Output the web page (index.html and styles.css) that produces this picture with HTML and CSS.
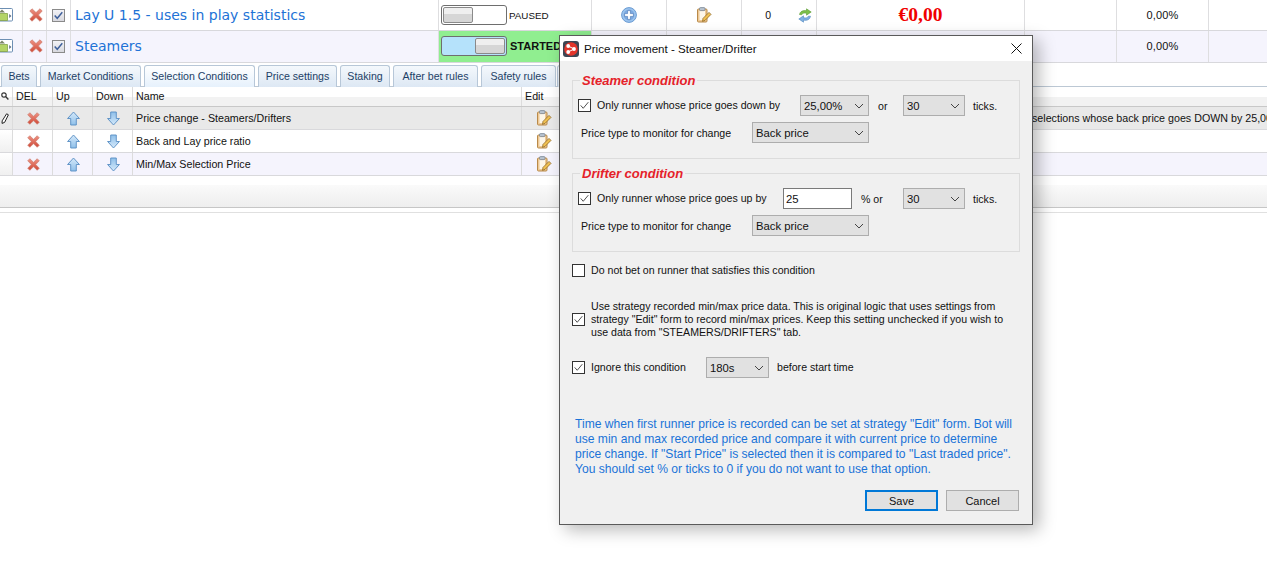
FILE: index.html
```html
<!DOCTYPE html>
<html lang="en">
<head>
<meta charset="utf-8">
<title>Price movement - Steamer/Drifter</title>
<link rel="stylesheet" href="styles.css">
</head>
<body>
<svg class="defs" width="0" height="0" aria-hidden="true">
  <defs>
    <linearGradient id="gx" x1="0" y1="0" x2="0" y2="1"><stop offset="0" stop-color="#ee9384"/><stop offset="1" stop-color="#cf4a38"/></linearGradient>
    <linearGradient id="ga" x1="0" y1="0" x2="0" y2="1"><stop offset="0" stop-color="#d5e9fa"/><stop offset="1" stop-color="#8fc0ea"/></linearGradient>
    <linearGradient id="gd" x1="0" y1="0" x2="0" y2="1"><stop offset="0" stop-color="#8fc0ea"/><stop offset="1" stop-color="#d5e9fa"/></linearGradient>
    <symbol id="i-x" viewBox="0 0 14 14"><path d="M3 .8 7 4.6 11 .8 13.2 3 9.4 7 13.2 11 11 13.2 7 9.4 3 13.2.8 11 4.6 7 .8 3Z" fill="url(#gx)" stroke="#cf8274" stroke-width=".8"/></symbol>
    <symbol id="i-up" viewBox="0 0 14 16"><path d="M7 1 13.4 8H10V15H4V8H.6Z" fill="url(#ga)" stroke="#5a8fc4"/></symbol>
    <symbol id="i-down" viewBox="0 0 14 16"><path d="M4 1H10V8H13.4L7 15 .6 8H4Z" fill="url(#gd)" stroke="#5a8fc4"/></symbol>
    <symbol id="i-clip" viewBox="0 0 16 16"><rect x="1.5" y="2" width="9.5" height="13" rx="1" fill="#eec995" stroke="#b98a4a"/><rect x="3.5" y="3.8" width="5.5" height="9.2" fill="#fdf6e8"/><rect x="3.5" y=".6" width="5.5" height="3" rx="1" fill="#b9c4d0" stroke="#6f7d8c" stroke-width=".7"/><path d="M6.5 14.4 7 11.4 13 5.4 15 7.4 9 13.4Z" fill="#f0c050" stroke="#8f6a2a" stroke-width=".8"/></symbol>
    <symbol id="i-plus" viewBox="0 0 16 16"><circle cx="8" cy="8" r="7.4" fill="#9cc4ee" stroke="#6a9bd2"/><circle cx="8" cy="8" r="5.4" fill="#7aa8e0"/><path d="M6.6 3.6H9.4V6.6H12.4V9.4H9.4V12.4H6.6V9.4H3.6V6.6H6.6Z" fill="#fff" stroke="#3f6fb0" stroke-width=".6"/></symbol>
    <symbol id="i-sync" viewBox="0 0 14 15"><path d="M1.5 6.5C2 3.5 5 2 8.5 2.8V.8L13.2 4 8.5 7.2V5.2C6 4.8 4.5 5.2 3.6 6.8Z" fill="#7cc04a" stroke="#5c9a34" stroke-width=".6"/><path d="M12.5 8.2C12 11.4 9 13 5.5 12.1V14.2L.8 11 5.5 7.8V9.8C8 10.2 9.5 9.8 10.4 8.2Z" fill="#7fb0e2" stroke="#4f86bd" stroke-width=".6"/></symbol>
    <symbol id="i-app" viewBox="0 0 14 14"><rect x="-4" y=".5" width="16.5" height="12.5" rx="1" fill="#fff" stroke="#6d8fb3"/><path d="M-2 5.5H7.5V12.5H-2Z" fill="#b4d466" stroke="#7a9a3a" stroke-width=".7"/><path d="M2 1.6 5 4.6H-1Z" fill="#7b8468"/><path d="M9.2 6 11.4 8 9.2 10Z" fill="#5e6f84"/></symbol>
    <symbol id="i-tick" viewBox="0 0 13 13"><path d="M2 6.4 5 9.8 11 2.6" fill="none" stroke="currentColor"/></symbol>
    <symbol id="i-chev" viewBox="0 0 10 6"><path d="M1 1 5 5 9 1" fill="none" stroke="#444" stroke-width="1"/></symbol>
  </defs>
</svg>

<main class="page">
  <section class="strategies">
    <div class="srow">
      <div class="c"><svg class="ic-app"><use href="#i-app"/></svg></div>
      <div class="c c-mid c-del"><svg class="ic-x"><use href="#i-x"/></svg></div>
      <div class="c c-mid"><span class="grid-check"><svg class="ic-tick"><use href="#i-tick"/></svg></span></div>
      <div class="c sname">Lay U 1.5 - uses in play statistics</div>
      <div class="c state"><span class="toggle"><span class="thumb"></span></span><span class="state-text">PAUSED</span></div>
      <div class="c c-mid"><svg class="ic-plus"><use href="#i-plus"/></svg></div>
      <div class="c c-mid"><svg class="ic-clip"><use href="#i-clip"/></svg></div>
      <div class="c count"><span>0</span><svg class="ic-sync"><use href="#i-sync"/></svg></div>
      <div class="c c-mid money">€0,00</div>
      <div class="c"></div>
      <div class="c c-mid pct">0,00%</div>
      <div class="c"></div>
      <div class="c c-end"></div>
    </div>
    <div class="srow srow-alt">
      <div class="c"><svg class="ic-app"><use href="#i-app"/></svg></div>
      <div class="c c-mid c-del"><svg class="ic-x"><use href="#i-x"/></svg></div>
      <div class="c c-mid"><span class="grid-check"><svg class="ic-tick"><use href="#i-tick"/></svg></span></div>
      <div class="c sname">Steamers</div>
      <div class="c state state-on"><span class="toggle toggle-on"><span class="thumb"></span></span><span class="state-text state-bold">STARTED</span></div>
      <div class="c"></div>
      <div class="c"></div>
      <div class="c"></div>
      <div class="c"></div>
      <div class="c"></div>
      <div class="c c-mid pct">0,00%</div>
      <div class="c"></div>
      <div class="c c-end"></div>
    </div>
  </section>

  <nav class="tabs">
    <span class="tab tab-bets">Bets</span>
    <span class="tab tab-market">Market Conditions</span>
    <span class="tab tab-active">Selection Conditions</span>
    <span class="tab tab-price">Price settings</span>
    <span class="tab tab-staking">Staking</span>
    <span class="tab tab-after">After bet rules</span>
    <span class="tab tab-safety">Safety rules</span>
    <span class="tab tab-more"></span>
  </nav>

  <section class="cond">
    <div class="crow chead">
      <div class="k k-first"><svg class="ic-search" viewBox="0 0 8 8"><circle cx="3" cy="3" r="2.2" fill="none" stroke="#333" stroke-width="1.2"/><path d="M4.6 4.6 7.4 7.4" stroke="#333" stroke-width="1.4"/></svg></div>
      <div class="k k-pad">DEL</div>
      <div class="k k-pad">Up</div>
      <div class="k k-pad">Down</div>
      <div class="k k-pad">Name</div>
      <div class="k k-pad">Edit</div>
      <div class="k"></div>
      <div class="k k-end"></div>
    </div>
    <div class="crow crow-sel">
      <div class="k k-first"><svg class="ic-pen" viewBox="0 0 8 11"><path d="M5.6 .8 7.4 1.8 3.6 9.4 1 10.4 1.2 7.8Z" fill="#fff" stroke="#222" stroke-width="1"/></svg></div>
      <div class="k k-mid k-nudge"><svg class="ic-x"><use href="#i-x"/></svg></div>
      <div class="k k-mid k-nudge"><svg class="ic-arrow"><use href="#i-up"/></svg></div>
      <div class="k k-mid k-nudge"><svg class="ic-arrow"><use href="#i-down"/></svg></div>
      <div class="k k-pad">Price change - Steamers/Drifters</div>
      <div class="k k-mid"><svg class="ic-clip"><use href="#i-clip"/></svg></div>
      <div class="k"></div>
      <div class="k k-end k-desc">selections whose back price goes DOWN by 25,00</div>
    </div>
    <div class="crow">
      <div class="k k-first k-sel"></div>
      <div class="k k-mid k-nudge"><svg class="ic-x"><use href="#i-x"/></svg></div>
      <div class="k k-mid k-nudge"><svg class="ic-arrow"><use href="#i-up"/></svg></div>
      <div class="k k-mid k-nudge"><svg class="ic-arrow"><use href="#i-down"/></svg></div>
      <div class="k k-pad">Back and Lay price ratio</div>
      <div class="k k-mid"><svg class="ic-clip"><use href="#i-clip"/></svg></div>
      <div class="k"></div>
      <div class="k k-end"></div>
    </div>
    <div class="crow crow-alt">
      <div class="k k-first k-sel"></div>
      <div class="k k-mid k-nudge"><svg class="ic-x"><use href="#i-x"/></svg></div>
      <div class="k k-mid k-nudge"><svg class="ic-arrow"><use href="#i-up"/></svg></div>
      <div class="k k-mid k-nudge"><svg class="ic-arrow"><use href="#i-down"/></svg></div>
      <div class="k k-pad">Min/Max Selection Price</div>
      <div class="k k-mid"><svg class="ic-clip"><use href="#i-clip"/></svg></div>
      <div class="k"></div>
      <div class="k k-end"></div>
    </div>
  </section>
  <div class="footer-bar"></div>
  <div class="footer-rule"></div>
</main>

<div class="dialog" role="dialog" aria-label="Price movement - Steamer/Drifter">
  <header class="titlebar">
    <svg class="logo" viewBox="0 0 16 16"><rect width="16" height="16" rx="3" fill="#3d4654"/><circle cx="8" cy="8" r="6.8" fill="#e3352b"/><circle cx="5.2" cy="5" r="1.9" fill="#fff"/><circle cx="5.2" cy="11" r="1.9" fill="#fff"/><circle cx="11" cy="8" r="1.9" fill="#fff"/><path d="M5.2 5 11 8 5.2 11" fill="none" stroke="#fff"/></svg>
    <span class="title">Price movement - Steamer/Drifter</span>
    <svg class="close" viewBox="0 0 11 11"><path d="M.5.5 10.5 10.5M10.5.5 .5 10.5" stroke="#111" stroke-width="1" fill="none"/></svg>
  </header>
  <div class="body">
    <fieldset class="group">
      <legend>Steamer condition</legend>
      <div class="line line-a">
        <span class="cb"><svg class="ic-tick"><use href="#i-tick"/></svg></span>
        <span class="lab lab-run">Only runner whose price goes down by</span>
        <span class="combo w69">25,00%<svg class="chev"><use href="#i-chev"/></svg></span>
        <span class="lab lab-or">or</span>
        <span class="combo w62">30<svg class="chev"><use href="#i-chev"/></svg></span>
        <span class="lab">ticks.</span>
      </div>
      <div class="line line-b">
        <span class="lab lab-type">Price type to monitor for change</span>
        <span class="combo w117">Back price<svg class="chev"><use href="#i-chev"/></svg></span>
      </div>
    </fieldset>

    <fieldset class="group group-2">
      <legend>Drifter condition</legend>
      <div class="line line-a">
        <span class="cb"><svg class="ic-tick"><use href="#i-tick"/></svg></span>
        <span class="lab lab-run2">Only runner whose price goes up by</span>
        <input class="num" value="25" aria-label="Percent">
        <span class="lab lab-pct">% or</span>
        <span class="combo w62">30<svg class="chev"><use href="#i-chev"/></svg></span>
        <span class="lab">ticks.</span>
      </div>
      <div class="line line-b">
        <span class="lab lab-type">Price type to monitor for change</span>
        <span class="combo w117">Back price<svg class="chev"><use href="#i-chev"/></svg></span>
      </div>
    </fieldset>

    <div class="opt opt-1">
      <span class="cb"></span>
      <span class="lab lab-raise">Do not bet on runner that satisfies this condition</span>
    </div>
    <div class="opt opt-2">
      <span class="cb"><svg class="ic-tick"><use href="#i-tick"/></svg></span>
      <span class="lab lab-multi">Use strategy recorded min/max price data. This is original logic that uses settings from<br>strategy "Edit" form to record min/max prices. Keep this setting unchecked if you wish to<br>use data from "STEAMERS/DRIFTERS" tab.</span>
    </div>
    <div class="opt opt-3">
      <span class="cb"><svg class="ic-tick"><use href="#i-tick"/></svg></span>
      <span class="lab lab-ign lab-raise">Ignore this condition</span>
      <span class="combo w63">180s<svg class="chev"><use href="#i-chev"/></svg></span>
      <span class="lab lab-raise">before start time</span>
    </div>

    <p class="note">Time when first runner price is recorded can be set at strategy "Edit" form. Bot will<br>use min and max recorded price and compare it with current price to determine<br>price change. If "Start Price" is selected then it is compared to "Last traded price".<br>You should set % or ticks to 0 if you do not want to use that option.</p>

    <div class="actions">
      <button class="btn btn-primary" type="button">Save</button>
      <button class="btn" type="button">Cancel</button>
    </div>
  </div>
</div>
</body>
</html>
```

FILE: styles.css
```css
* { box-sizing: border-box; }
html, body { margin: 0; padding: 0; }
body {
  width: 1267px;
  height: 573px;
  overflow: hidden;
  background: #fff;
  font-family: "Liberation Sans", Arial, sans-serif;
  color: #111;
  position: relative;
}
.defs { position: absolute; }
svg { display: block; flex: none; }

/* strategies table */
.srow {
  display: grid;
  grid-template-columns: 23px 24px 24px 368px 153px 75px 75px 75px 208px 92px 92px 92px 1fr;
  height: 31px;
  border-bottom: 1px solid #d8d8dc;
  background: #fff;
}
.srow-alt { height: 32px; background: #f5f4fd; }
.srow-alt .c { padding-bottom: 1px; }
.c {
  display: flex;
  align-items: center;
  min-width: 0;
  border-right: 1px solid #dedee0;
}
.c-mid { justify-content: center; }
.c-del { padding-left: 3px; }
.c-end { border-right: 0; }
.ic-app { width: 14px; height: 14px; }
.ic-x { width: 14px; height: 14px; }
.grid-check {
  width: 13px;
  height: 13px;
  border: 1px solid #8a8a8a;
  background: linear-gradient(#f2f2f6, #d8d8de);
  color: #3e5f9a;
}
.grid-check .ic-tick { stroke-width: 1.7; }
.ic-tick { width: 11px; height: 11px; stroke-width: 1.1; color: inherit; }
.sname {
  padding-left: 4px;
  font-family: "DejaVu Sans", sans-serif;
  font-size: 14px;
  color: #2272d6;
}
.state { padding-left: 2px; gap: 2px; }
.state-on { background: #90ee90; }
.toggle {
  width: 66px;
  height: 20px;
  border: 1px solid #6e6e6e;
  border-radius: 3px;
  background: #fff;
  display: flex;
  padding: 1px;
}
.toggle-on { background: #b5e2fb; justify-content: flex-end; }
.thumb {
  width: 30px;
  border: 1px solid #8a8a8a;
  border-radius: 2px;
  background: linear-gradient(#efefef 0 40%, #d6d6d6 40% 100%);
}
.state-text { font-size: 9.8px; color: #111; }
.state-bold { font-size: 11px; font-weight: 700; padding-left: 1px; }
.ic-plus { width: 16px; height: 16px; }
.ic-clip { width: 16px; height: 16px; }
.count { justify-content: flex-end; gap: 27px; padding-right: 4px; font-size: 10.5px; }
.ic-sync { width: 14px; height: 15px; }
.money {
  font-family: "Liberation Serif", serif;
  font-weight: 700;
  font-size: 19.5px;
  color: #f00000;
}
.pct { font-size: 11px; letter-spacing: .2px; }

/* tabs */
.tabs {
  display: flex;
  align-items: flex-end;
  gap: 3px;
  height: 24px;
  padding: 2px 0 0 1px;
  border-bottom: 1px solid #bcc8d4;
}
.tab {
  height: 22px;
  margin-bottom: -1px;
  padding: 0 0 2px;
  display: flex;
  align-items: center;
  justify-content: center;
  font-size: 10.6px;
  color: #1d3f66;
  border: 1px solid #b7c7d8;
  border-bottom: 0;
  border-radius: 3px 3px 0 0;
  background: linear-gradient(#f4f8fc, #dde8f4);
  white-space: nowrap;
}
.tab-bets { width: 36px; }
.tab-market { width: 101px; }
.tab-active { width: 111px; background: linear-gradient(#fff, #e6f1fc); }
.tab-price { width: 79px; }
.tab-staking { width: 50px; }
.tab-after { width: 85px; }
.tab-safety { width: 75px; }
.tab-more { width: 40px; margin-left: -2px; }

/* conditions table */
.crow {
  display: grid;
  grid-template-columns: 13px 40px 40px 40px 389px 44px 464px 1fr;
  height: 23px;
  border-bottom: 1px solid #d9d9dc;
  font-size: 10.7px;
  color: #111;
}
.chead {
  height: 20px;
  background: linear-gradient(#fff 0 50%, #f2f2f2 50% 100%);
  border-bottom: 1px solid #c8c8c8;
}
.chead .k { padding-bottom: 2px; }
.crow-sel { background: #e9e9e9; }
.crow-alt { background: #f5f4fd; }
.k {
  display: flex;
  align-items: center;
  min-width: 0;
  border-right: 1px solid #dcdcdc;
  white-space: nowrap;
  overflow: hidden;
}
.k-first { padding-left: 1px; }
.k-sel { background: linear-gradient(#fff, #f0f0f0); }
.k-pad { padding-left: 3px; }
.k-mid { justify-content: center; }
.k-nudge { padding-left: 2px; }
.k-end { border-right: 0; }
.k-desc { padding-left: 2px; }
.k .ic-x { width: 13px; height: 13px; }
.ic-search { width: 8px; height: 8px; }
.ic-pen { width: 8px; height: 11px; }
.ic-arrow { width: 13px; height: 15px; }

.footer-bar {
  height: 23px;
  margin-top: 9px;
  background: linear-gradient(#fafafa, #eeeeee);
  border-bottom: 1px solid #c6c6c6;
}
.footer-rule {
  height: 1px;
  margin-top: 4px;
  background: #e0e0e0;
}

/* dialog */
.dialog {
  position: absolute;
  left: 559px;
  top: 35px;
  width: 474px;
  height: 490px;
  border: 1px solid #5a5a5a;
  background: #f0f0f0;
  box-shadow: 6px 5px 16px rgba(0, 0, 0, .28);
  font-size: 10.6px;
  color: #111;
}
.titlebar {
  height: 25px;
  background: #fff;
  display: flex;
  align-items: center;
  padding: 0 10px 0 3px;
}
.logo { width: 16px; height: 16px; }
.title { margin-left: 5px; font-size: 11.6px; flex: 1; }
.close { width: 11px; height: 11px; }
.body { padding: 13px 12px 0 12px; }

.group {
  margin: 0;
  padding: 8px 0 0 5px;
  height: 85px;
  border: 1px solid #dcdcdc;
  min-width: 0;
}
.group-2 { margin-top: 8px; }
.group legend {
  margin-left: 2px;
  padding: 0 2px;
  font-size: 13px;
  line-height: 13px;
  font-weight: 700;
  font-style: italic;
  color: #e5222a;
}
.line { display: flex; align-items: center; }
.line-a { height: 21px; }
.line-b { height: 21px; margin-top: 6px; padding-left: 3px; }
.cb {
  width: 13px;
  height: 13px;
  flex: none;
  background: #fff;
  border: 1px solid #333;
  color: #444;
}
.lab { white-space: nowrap; }
.lab-raise { padding-bottom: 2px; }
.lab-run { margin-left: 6px; width: 203px; padding-bottom: 2px; }
.lab-run2 { margin-left: 6px; width: 186px; padding-bottom: 2px; }
.lab-or { width: 34px; padding-left: 9px; }
.lab-pct { width: 51px; padding-left: 9px; }
.lab-type { width: 171px; }
.combo {
  height: 21px;
  display: flex;
  align-items: center;
  justify-content: space-between;
  padding: 0 4px 0 3px;
  font-size: 11.3px;
  background: #e1e1e1;
  border: 1px solid #adadad;
  flex: none;
}
.w69 { width: 69px; }
.w62 { width: 62px; margin-right: 8px; }
.w63 { width: 63px; margin-right: 2px; }
.w117 { width: 117px; }
.chev { width: 10px; height: 6px; }
.num {
  width: 69px;
  height: 21px;
  border: 1px solid #7a7a7a;
  background: #fff;
  padding: 0 2px;
  font: 11.3px "Liberation Sans", Arial, sans-serif;
  color: #111;
}

.opt { display: flex; align-items: center; }
.opt .lab { margin-left: 6px; }
.opt-1 { margin-top: 12px; height: 13px; }
.opt-2 { margin-top: 23px; height: 39px; }
.opt .lab-multi { line-height: 13px; }
.opt-3 { margin-top: 18px; height: 21px; }
.opt .lab-ign { width: 115px; }

.note {
  margin: 39px 0 0 3px;
  font-size: 12.1px;
  line-height: 15px;
  color: #1a73d8;
  white-space: nowrap;
}
.actions {
  display: flex;
  justify-content: flex-end;
  gap: 8px;
  margin-top: 13px;
  padding-right: 1px;
}
.btn {
  width: 73px;
  height: 21px;
  padding: 0;
  font: 11px "Liberation Sans", Arial, sans-serif;
  color: #111;
  background: #e1e1e1;
  border: 1px solid #adadad;
}
.btn-primary { border: 2px solid #0078d7; }
```
